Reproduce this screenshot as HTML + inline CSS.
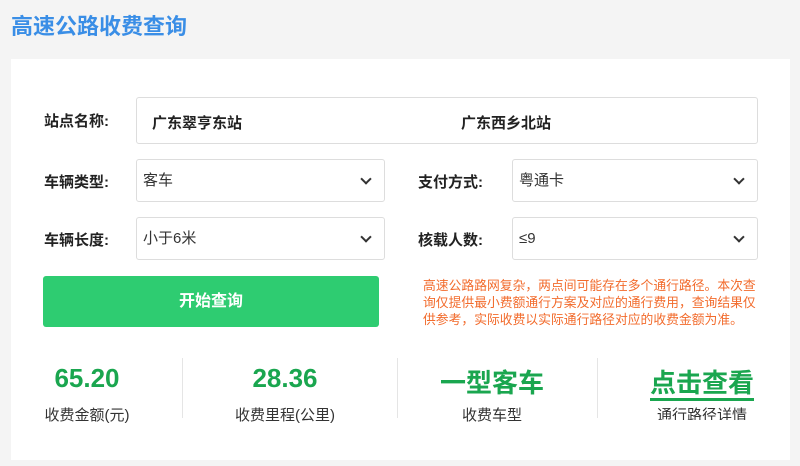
<html><head><style>
body{margin:0;width:800px;height:466px;background:#f4f4f4;font-family:"Liberation Sans","Noto Sans CJK SC",sans-serif;position:relative;overflow:hidden}
.a{position:absolute}
.t{left:11px;top:9px;font-size:22px;font-weight:bold;color:#3a8ee6}
.card{left:11px;top:59px;width:779px;height:401px;background:#fff}
.lbl{font-size:15px;font-weight:bold;color:#222}
.box{border:1px solid #ddd;border-radius:3px;background:#fff;box-sizing:border-box;font-size:15px;color:#333}
.sel{padding-left:6px;line-height:41px}
.sel:after{content:"";position:absolute;right:14px;top:15px;width:6px;height:6px;border-right:2px solid #333;border-bottom:2px solid #333;transform:rotate(45deg)}
.num{font-size:26px;font-weight:bold;color:#1aa64f;text-align:center;width:200px}
.sub{font-size:15px;color:#333;text-align:center;width:200px}
.div{width:1px;height:60px;background:#e5e5e5;top:358px}
</style></head><body>
<div class="a t">高速公路收费查询</div>
<div class="a card"></div>
<div class="a lbl" style="left:44px;top:110px">站点名称:</div>
<div class="a box" style="left:136px;top:97px;width:622px;height:47px"></div>
<div class="a lbl" style="left:152px;top:112px">广东翠亨东站</div>
<div class="a lbl" style="left:461px;top:112px">广东西乡北站</div>
<div class="a lbl" style="left:44px;top:171px">车辆类型:</div>
<div class="a box sel" style="left:136px;top:159px;width:249px;height:43px">客车</div>
<div class="a lbl" style="left:418px;top:171px">支付方式:</div>
<div class="a box sel" style="left:512px;top:159px;width:246px;height:43px">粤通卡</div>
<div class="a lbl" style="left:44px;top:229px">车辆长度:</div>
<div class="a box sel" style="left:136px;top:217px;width:249px;height:43px">小于6米</div>
<div class="a lbl" style="left:418px;top:229px">核载人数:</div>
<div class="a box sel" style="left:512px;top:217px;width:246px;height:43px">≤9</div>
<div class="a" style="left:43px;top:276px;width:336px;height:51px;background:#2ecc71;border-radius:3px;color:#fff;font-size:16px;font-weight:bold;text-align:center;line-height:51px">开始查询</div>
<div class="a" style="left:423px;top:277px;width:337px;font-size:12.8px;line-height:17px;color:#f26b2c">高速公路路网复杂，两点间可能存在多个通行路径。本次查询仅提供最小费额通行方案及对应的通行费用，查询结果仅供参考，实际收费以实际通行路径对应的收费金额为准。</div>
<div class="a num" style="left:-13px;top:363px">65.20</div>
<div class="a sub" style="left:-13px;top:404px">收费金额(元)</div>
<div class="a div" style="left:182px"></div>
<div class="a num" style="left:185px;top:363px">28.36</div>
<div class="a sub" style="left:185px;top:404px">收费里程(公里)</div>
<div class="a div" style="left:397px"></div>
<div class="a num" style="left:392px;top:363px">一型客车</div>
<div class="a sub" style="left:392px;top:404px">收费车型</div>
<div class="a div" style="left:597px"></div>
<div class="a num" style="left:602px;top:363px"><span style="border-bottom:3px solid #1aa64f">点击查看</span></div>
<div class="a sub" style="left:602px;top:404px;height:16px;overflow:hidden">通行路径详情</div>
</body></html>
